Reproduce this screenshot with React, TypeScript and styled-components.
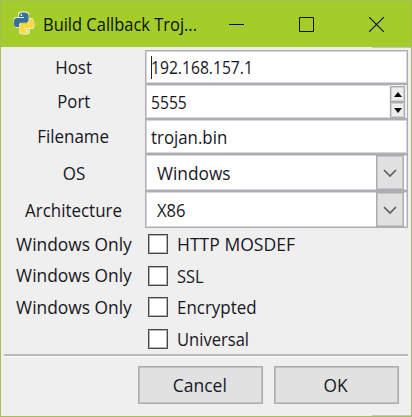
import React from "react";
import styled, { createGlobalStyle } from "styled-components";

const Global = createGlobalStyle`
  * { box-sizing: border-box; }
  body { margin: 0; overflow: hidden; }
`;

const Window = styled.div`
  width: 412px;
  height: 417px;
  display: flex;
  flex-direction: column;
  background: #efefef;
  border: 1px solid #a6bd58;
  color: #17171f;
  font: 18px/24px "Open Sans", "Noto Sans", sans-serif;
`;

const TitleBar = styled.header`
  height: 46px;
  flex: none;
  display: flex;
  align-items: center;
  padding-left: 11px;
  background: #a4cc2a;
  color: #0c1200;
`;

const Logo = styled.svg`
  flex: none;
  width: 24px;
  height: 24px;
  margin-bottom: 2px;
`;

const Title = styled.h1`
  margin: 0 0 0 7px;
  width: 158px;
  flex: none;
  font-size: 19px;
  font-weight: 400;
  line-height: 26px;
  white-space: nowrap;
`;

const Controls = styled.div`
  display: flex;
  align-items: center;
`;

const ControlButton = styled.button`
  flex: none;
  width: 70px;
  height: 44px;
  padding: 0;
  border: 0;
  background: none;
  display: grid;
  place-items: center;
`;

const Text = styled.span<{ $scale?: number; $left?: boolean }>`
  display: inline-block;
  white-space: nowrap;
  transform: scaleX(${(p) => p.$scale ?? 1});
  transform-origin: ${(p) => (p.$left ? "left" : "center")};
`;

/* Thin shade under the right end of the title bar and above the bottom frame. */
const EdgeShade = styled.div`
  flex: none;
  width: 39px;
  height: 1px;
  margin-left: auto;
  background: #c4c4c8;
`;

const Form = styled.main`
  display: grid;
  grid-template-columns: 141px 263px;
  grid-template-rows: 34px 35px 35px 37px 37px;
  padding: 2px 0 0 3px;
`;

const Label = styled.label<{ $lift?: boolean }>`
  display: flex;
  align-items: center;
  justify-content: center;
  padding: 0 2px ${(p) => (p.$lift ? 1 : 0)}px 0;
`;

const Field = styled.div<{ $indent?: number }>`
  display: flex;
  align-items: center;
  min-width: 0;
  padding-left: ${(p) => p.$indent ?? 5}px;
  background: #fff;
  border: 1px solid #adadb5;
  box-shadow: inset 0 0 0 1px #d5d5dc;
`;

const Caret = styled.i`
  width: 1px;
  height: 23px;
  margin-right: -1px;
  background: #222;
`;

const Spinner = styled.div`
  align-self: stretch;
  width: 18px;
  margin-left: auto;
  padding: 1px 2px 0 1px;
  background: #efefef;
  display: grid;
  grid-template-rows: 16px 16px;
`;

const SpinButton = styled.button`
  padding: 0;
  display: grid;
  place-items: center;
  background: #ededed;
  border: 1px solid #acacac;
  box-shadow: inset 0 0 0 1px #d2d2d2;
`;

const DropButton = styled.button`
  align-self: stretch;
  width: 28px;
  margin: 0 3px 0 auto;
  padding: 0;
  display: grid;
  place-items: center;
  background: #e1e1e1;
  border: 1px solid #acacac;
  box-shadow: inset 0 0 0 1px #c6c6c6;
`;

const Options = styled.section`
  display: grid;
  grid-template-columns: 141px 263px;
  grid-auto-rows: 31.5px;
  padding: 0.5px 0 0.5px 3px;
`;

const Option = styled.label`
  display: flex;
  align-items: center;
  gap: 9px;
  padding-left: 3px;
`;

const Box = styled.span`
  width: 20px;
  height: 20px;
  background: #fff;
  border: 1px solid #484848;
  box-shadow: inset 0 0 0 1px #b4b4b4;
`;

const Footer = styled.footer`
  flex: 1;
  margin: -1px 3px 0;
  padding: 10px 9px 0 0;
  border-top: 2px solid #b9b9b9;
  display: flex;
  justify-content: flex-end;
  gap: 11px;
  box-shadow: inset 0 1px #fafafa;
`;

const Button = styled.button`
  width: 125px;
  height: 38px;
  padding: 0 2px 0 0;
  color: inherit;
  font: inherit;
  background: #e1e1e1;
  border: 1px solid #acacac;
  box-shadow: inset 0 0 0 1px #c2c2c2;
`;

const PythonIcon = () => (
  <Logo viewBox="0 0 24 24">
    <g fill="#e4edc6" stroke="#e4edc6" strokeWidth="1.8" strokeLinejoin="round">
      <path d="M7 2Q11 .3 16 2V10H8V16H4Q1 12 3 7H11V6H7Z" />
      <path d="M17 22Q13 23.7 8 22V14H16V8H20Q23 12 21 17H13V18H17Z" />
    </g>
    <path fill="#376f9f" d="M7 4.5Q7 1.5 11.5 1.5Q16.5 1.5 16.5 4.5V9Q16.5 11.5 14 11.5H9.5Q7 11.5 7 14V16H4.5Q1.8 16 1.8 11.5Q1.8 7 5 7H12V6H7Z" />
    <path fill="#ffd845" d="M17 19.5Q17 22.5 12.5 22.5Q7.5 22.5 7.5 19.5V15Q7.5 12.5 10 12.5H14.5Q17 12.5 17 10V8H19.5Q22.2 8 22.2 12.5Q22.2 17 19 17H12V18H17Z" />
    <circle cx="9.3" cy="4" r="1" fill="#e4edf2" />
    <circle cx="14.7" cy="20" r="1" fill="#fff6cf" />
  </Logo>
);

const Chevron = () => (
  <svg width="14" height="10" viewBox="0 0 14 10">
    <path d="M1 2L7 8L13 2" fill="none" stroke="#606060" strokeWidth="1.7" />
  </svg>
);

const Arrow = ({ down = false }: { down?: boolean }) => (
  <svg width="8" height="5" viewBox="0 0 8 5">
    <path d={down ? "M0 0H8L4 5Z" : "M0 5H8L4 0Z"} fill="#080808" />
  </svg>
);

const options = [
  { note: "Windows Only", name: "HTTP MOSDEF", scale: 0.975 },
  { note: "Windows Only", name: "SSL", scale: 0.91 },
  { note: "Windows Only", name: "Encrypted", scale: 0.94 },
  { note: "", name: "Universal", scale: 0.92 },
];

export default function App() {
  return (
    <Window>
      <Global />
      <TitleBar>
        <PythonIcon />
        <Title><Text $left $scale={0.866}>Build Callback Troj...</Text></Title>
        <Controls>
          <ControlButton aria-label="Minimize">
            <svg width="15" height="15"><path d="M0 7.5H15" stroke="#111" /></svg>
          </ControlButton>
          <ControlButton aria-label="Maximize">
            <svg width="15" height="15"><path d="M.5 .5H14.5V14.5H.5Z" fill="none" stroke="#111" /></svg>
          </ControlButton>
          <ControlButton aria-label="Close">
            <svg width="15" height="15"><path d="M0 0L15 15M15 0L0 15" stroke="#111" strokeWidth="1.1" /></svg>
          </ControlButton>
        </Controls>
      </TitleBar>
      <EdgeShade />
      <Form>
        <Label><Text $scale={0.94}>Host</Text></Label>
        <Field><Caret /><Text $left $scale={0.87}>192.168.157.1</Text></Field>
        <Label $lift><Text $scale={0.93}>Port</Text></Label>
        <Field>
          <Text $left $scale={0.87}>5555</Text>
          <Spinner>
            <SpinButton aria-label="Increase"><Arrow /></SpinButton>
            <SpinButton aria-label="Decrease"><Arrow down /></SpinButton>
          </Spinner>
        </Field>
        <Label $lift><Text $scale={0.94}>Filename</Text></Label>
        <Field><Text $left $scale={0.935}>trojan.bin</Text></Field>
        <Label><Text $scale={0.94}>OS</Text></Label>
        <Field $indent={11}><Text $left $scale={0.96}>Windows</Text><DropButton aria-label="Choose OS"><Chevron /></DropButton></Field>
        <Label><Text $scale={0.94}>Architecture</Text></Label>
        <Field $indent={11}><Text $left $scale={0.92}>X86</Text><DropButton aria-label="Choose architecture"><Chevron /></DropButton></Field>
      </Form>
      <Options>
        {options.map((o) => (
          <React.Fragment key={o.name}>
            <Label $lift><Text $scale={0.965}>{o.note}</Text></Label>
            <Option><Box /><Text $left $scale={o.scale}>{o.name}</Text></Option>
          </React.Fragment>
        ))}
      </Options>
      <Footer>
        <Button><Text $scale={0.97}>Cancel</Text></Button>
        <Button><Text $scale={0.96}>OK</Text></Button>
      </Footer>
      <EdgeShade />
    </Window>
  );
}
